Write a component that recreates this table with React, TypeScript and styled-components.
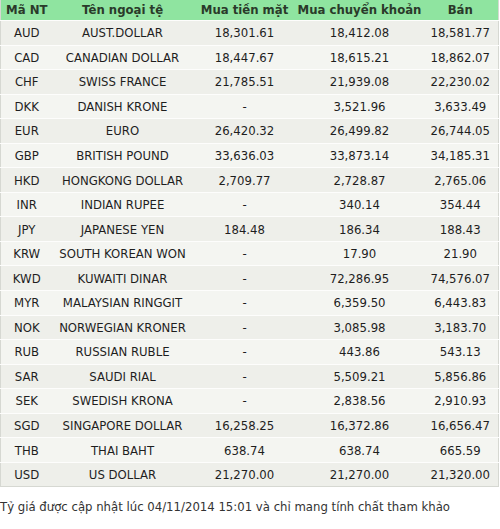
import React from "react";
import styled, { createGlobalStyle } from "styled-components";

const Global = createGlobalStyle`
  html, body { margin: 0; padding: 0; background: #ffffff; }
  body { font-family: "DejaVu Sans Condensed", "DejaVu Sans", Tahoma, sans-serif; font-stretch: condensed; }
`;

const Page = styled.div`
  width: 500px;
  display: flex;
  flex-direction: column;
`;

const Table = styled.table`
  width: 498px;
  border-collapse: collapse;
  table-layout: fixed;
  border: 1px solid #d6d8d2;
  border-top: none;
  font-size: 13px;
  color: #222;
`;

const HeadRow = styled.tr`
  background: #8fe4a0;
  height: 20px;
`;

const Th = styled.th`
  font-weight: bold;
  color: #2a3a2a;
  padding: 0;
  text-align: center;
  white-space: nowrap;
  line-height: 20px;
`;

const Row = styled.tr<{ $alt: boolean }>`
  background: ${(p) => (p.$alt ? "#f4f5f1" : "#eeefea")};
  height: 24.56px;
  border-top: 1px solid #fdfdfc;
`;

const Td = styled.td`
  padding: 0;
  text-align: center;
  white-space: nowrap;
  color: #1e1e1e;
`;

const Note = styled.p`
  margin: 12px 0 0 0;
  font-size: 13px;
  color: #333;
`;

const rows: [string, string, string, string, string][] = [
  ["AUD", "AUST.DOLLAR", "18,301.61", "18,412.08", "18,581.77"],
  ["CAD", "CANADIAN DOLLAR", "18,447.67", "18,615.21", "18,862.07"],
  ["CHF", "SWISS FRANCE", "21,785.51", "21,939.08", "22,230.02"],
  ["DKK", "DANISH KRONE", "-", "3,521.96", "3,633.49"],
  ["EUR", "EURO", "26,420.32", "26,499.82", "26,744.05"],
  ["GBP", "BRITISH POUND", "33,636.03", "33,873.14", "34,185.31"],
  ["HKD", "HONGKONG DOLLAR", "2,709.77", "2,728.87", "2,765.06"],
  ["INR", "INDIAN RUPEE", "-", "340.14", "354.44"],
  ["JPY", "JAPANESE YEN", "184.48", "186.34", "188.43"],
  ["KRW", "SOUTH KOREAN WON", "-", "17.90", "21.90"],
  ["KWD", "KUWAITI DINAR", "-", "72,286.95", "74,576.07"],
  ["MYR", "MALAYSIAN RINGGIT", "-", "6,359.50", "6,443.83"],
  ["NOK", "NORWEGIAN KRONER", "-", "3,085.98", "3,183.70"],
  ["RUB", "RUSSIAN RUBLE", "-", "443.86", "543.13"],
  ["SAR", "SAUDI RIAL", "-", "5,509.21", "5,856.86"],
  ["SEK", "SWEDISH KRONA", "-", "2,838.56", "2,910.93"],
  ["SGD", "SINGAPORE DOLLAR", "16,258.25", "16,372.86", "16,656.47"],
  ["THB", "THAI BAHT", "638.74", "638.74", "665.59"],
  ["USD", "US DOLLAR", "21,270.00", "21,270.00", "21,320.00"],
];

export default function App() {
  return (
    <Page>
      <Global />
      <Table>
        <colgroup>
          <col style={{ width: 52 }} />
          <col style={{ width: 140 }} />
          <col style={{ width: 104 }} />
          <col style={{ width: 126 }} />
          <col style={{ width: 76 }} />
        </colgroup>
        <thead>
          <HeadRow>
            <Th>Mã NT</Th>
            <Th>Tên ngoại tệ</Th>
            <Th>Mua tiền mặt</Th>
            <Th>Mua chuyển khoản</Th>
            <Th>Bán</Th>
          </HeadRow>
        </thead>
        <tbody>
          {rows.map((r, i) => (
            <Row key={r[0]} $alt={i % 2 === 1}>
              {r.map((c, j) => (
                <Td key={j}>{c}</Td>
              ))}
            </Row>
          ))}
        </tbody>
      </Table>
      <Note>Tỷ giá được cập nhật lúc 04/11/2014 15:01 và chỉ mang tính chất tham khảo</Note>
    </Page>
  );
}
